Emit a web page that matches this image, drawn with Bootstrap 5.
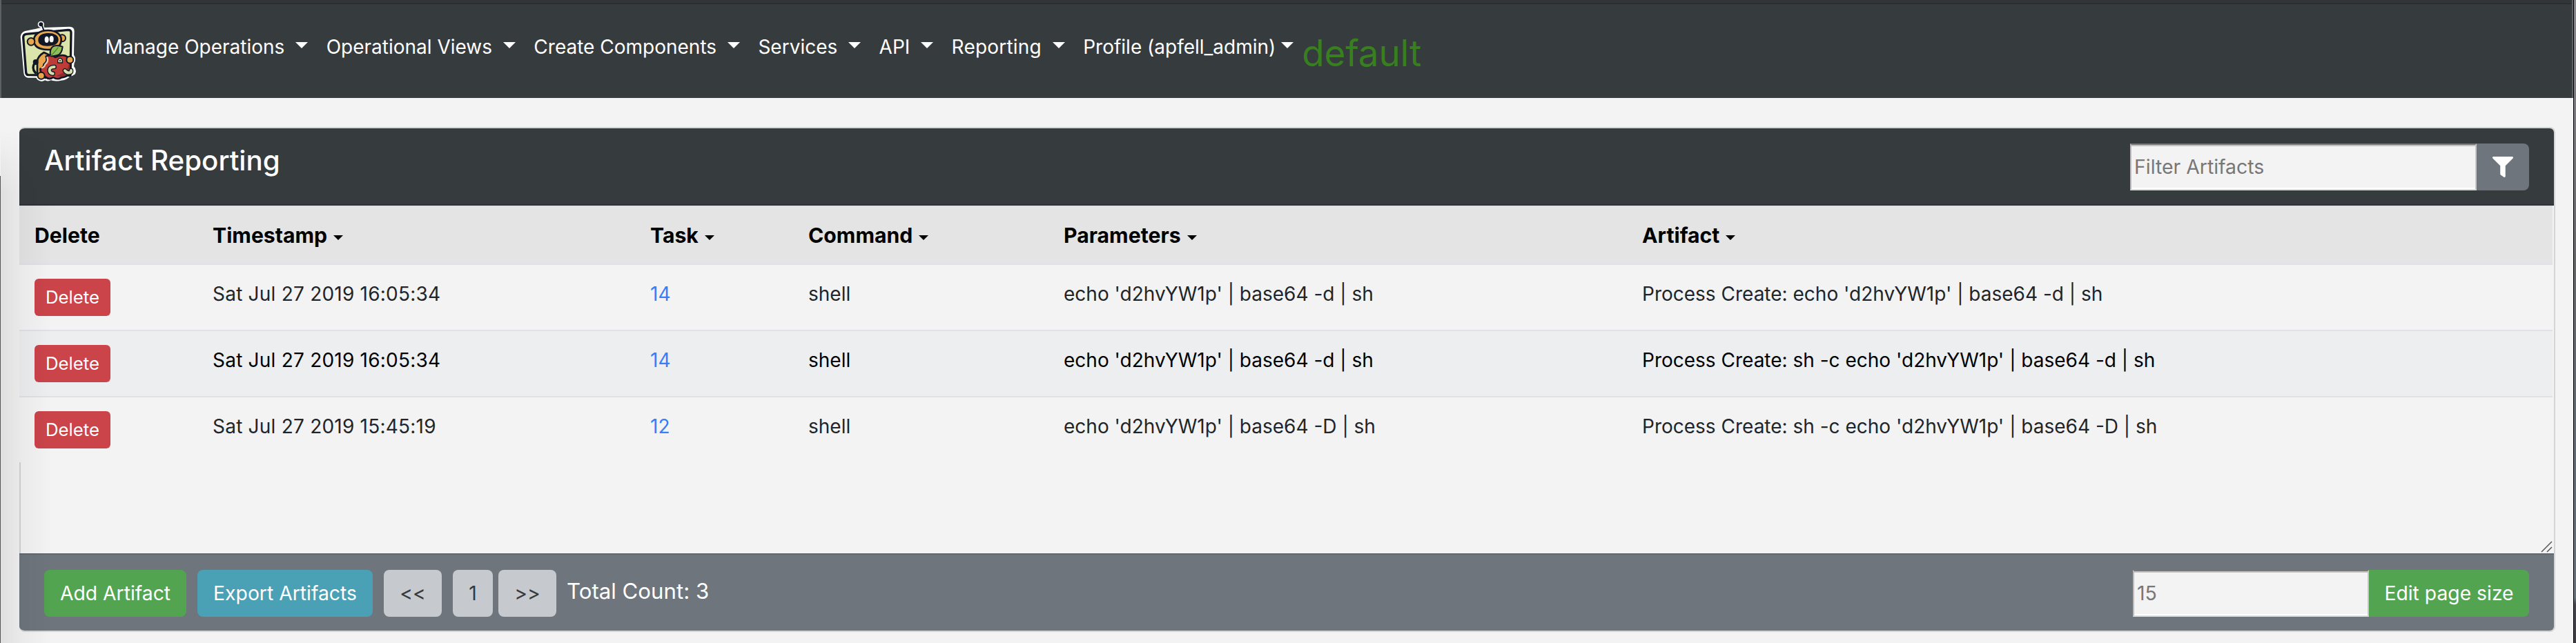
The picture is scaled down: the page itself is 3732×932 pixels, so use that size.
<!DOCTYPE html>
<html lang="en">
<head>
<meta charset="utf-8">
<title>Artifact Reporting</title>
<link rel="stylesheet" href="https://cdn.jsdelivr.net/npm/bootstrap@5.3.0/dist/css/bootstrap.min.css">
<script src="https://cdn.jsdelivr.net/npm/bootstrap@5.3.0/dist/js/bootstrap.bundle.min.js"></script>
<style>
  body { font-family: Inter, "Liberation Sans", sans-serif; font-size: 28px; line-height: 45px; background: #f3f3f3; color: #212529; height: 932px; overflow: hidden; position: relative; }
  a { text-decoration: none; color: #377ef7; }
  /* navigation */
  .top-strip { height: 6px; background: #313538; border-bottom: 1px solid #24282b; }
  .main-nav { height: 136px; background: #363b3e; padding: 0 0 0 29px; align-items: flex-start; flex-wrap: nowrap; justify-content: flex-start; }
  .logo { width: 82px; height: 90px; margin-top: 24px; flex: none; }
  .menus { margin: 40px 0 0 41.500px; gap: 26.300px; }
  .menus a { color: #fff; white-space: nowrap; }
  .menus a:nth-child(6) { letter-spacing: .2px; }
  .tri { display: inline-block; border: 9px solid transparent; border-top-color: currentColor; border-bottom: 0; margin-left: 16px; vertical-align: 8px; }
  .op-name { color: #38801f; font-size: 53px; line-height: 60px; letter-spacing: -.2px; margin: 40.5px 0 0 12px; }
  /* card */
  .report { margin: 42px 30px 0 28px; border: 2px solid #d3d4d4; border-left: 0; border-radius: 8px; background: #f3f3f3; overflow: hidden; height: 732px; }
  .report-head { height: 112px; padding: 22px 36px 0 36px; background: #363b3e; border-bottom: 2px solid #2f3337; }
  .report-head h1 { font-size: 40.3px; font-weight: 500; line-height: 48px; color: #fff; margin: 1px 0 0; }
  .report-body { height: 504px; position: relative; border-left: 2px solid #d3d4d4; }
  .grid-table { width: 3670px; margin-left: -2px; table-layout: fixed; border-collapse: separate; border-spacing: 0; background: #f3f3f3; }
  .grid-table th { height: 86px; padding: 0 0 0 22px; background: #e4e4e4; border-top: 2px solid #dee2e6; border-bottom: 2px solid #dee2e6; color: #000; font-size: 30.2px; font-weight: 700; vertical-align: middle; }
  .grid-table td { height: 96px; padding: 19.6px 0 0 22px; border-bottom: 2px solid #dee2e6; vertical-align: top; white-space: nowrap; }
  .grid-table tbody tr:last-child td { border: 0; height: 94px; }
  .grid-table .alt td { background: #edeef0; color: #000; }
  .stamp { letter-spacing: .22px; }
  .tri-sm { border-width: 7px; border-bottom: 0; margin-left: 9px; vertical-align: 4px; }
  .btn { border: 0; border-radius: 8px; font-size: 28.3px; line-height: 45px; padding: 0; height: 68px; color: #fff; }
  .btn-del { display: block; width: 110px; height: 54px; font-size: 25.8px; border-radius: 6px; background: #cb444a; margin-top: .4px; }
  .btn-add { width: 206px; background: #52a450; }
  .btn-exp { width: 254px; background: #4aa0b5; }
  .btn-page { background: #c6c9ce; color: #36393d; }
  .btn-funnel { width: 76px; background: #6e757d; }
  .inset-box { height: 68px; border: 2px solid; border-color: #777 #c8c8c8 #dcdcdc #bdbdbd; border-radius: 0; background: #f3f3f3; box-shadow: inset 0 2px #c3c3c3, inset 0 -2px #fff; padding: 0 0 1px 4px; font: inherit; font-size: 28.4px; color: #777; outline: 0; }
  .inset-box::placeholder { color: #777; opacity: 1; }
  .box-filter { width: 502px; }
  .box-page { width: 342px; }
  .joined { border-radius: 0 8px 8px 0; }
  .grip { position: absolute; right: 2px; bottom: 1px; }
  .report-foot { height: 112px; padding: 22px 36px 0 36px; background: #6e757d; border-top: 2px solid #62686f; color: #fff; align-items: flex-start; }
  .total { font-size: 31.2px; margin: 8.5px 0 0 15px; }
  /* shading along the window's edges */
  .edge-shade { position: absolute; left: 1px; top: 190px; width: 75px; bottom: 0; background: linear-gradient(90deg, rgba(0,0,0,.075), rgba(0,0,0,.03) 45%, transparent); -webkit-mask-image: linear-gradient(transparent, #000 90px); mask-image: linear-gradient(transparent, #000 90px); pointer-events: none; }
  .edge-line { position: absolute; left: 0; top: 255px; width: 1px; bottom: 0; background: #555; }
  .edge-nav { position: absolute; left: 0; top: 0; width: 2px; height: 142px; background: #5d6164; }
  .edge-nav-r { position: absolute; right: 4px; top: 0; width: 2px; height: 142px; background: #5d6164; }
  .edge-right { position: absolute; right: 0; top: 0; width: 4px; bottom: 0; border-left: 1px solid #000; background: linear-gradient(#8a8a8e, #66666c 40%, #5e6b78 70%, #64717e 93%, #444552 94%, #3e3b45); }
</style>
</head>
<body>
<div class="top-strip"></div>
<nav class="navbar main-nav">
  <svg class="logo" viewBox="85 90 246 270" stroke-linejoin="round" stroke-linecap="round">
    <g fill="#fff" stroke="#fff" stroke-width="10">
      <circle cx="176" cy="106" r="9"/><path d="M178 108l8 20" stroke-width="16"/>
      <path d="M108 140L148 132Q165 126 190 125L300 121Q316 121 316 135L314 240Q326 257 316 273L314 290Q328 306 320 319Q310 327 300 327Q285 345 262 345Q235 351 219 343Q205 352 193 342Q180 356 163 342L158 333L118 333Q108 330 106 318L92 160Q94 145 108 140Z"/>
    </g>
    <path d="M112 148L294 130Q307 130 307 142L304 328L120 326Q112 325 111 315L99 163Q99 150 112 148Z" fill="#dbe5ab" stroke="#111724" stroke-width="10"/>
    <path d="M180 109q5 14 9 24" stroke="#111724" stroke-width="6" fill="none"/><circle cx="176" cy="106" r="9" fill="#111724"/>
    <path d="M189 228Q161 245 160 267L160 320 196 339 214 240Z" fill="#e8a64f" stroke="#111724" stroke-width="8"/>
    <path d="M150 272Q133 295 152 317" stroke="#111724" stroke-width="10" fill="none"/><circle cx="153" cy="270" r="12" fill="#111724"/>
    <circle cx="268" cy="166" r="15" fill="#e8a64f" stroke="#111724" stroke-width="6"/>
    <path d="M145 178C143 149 172 132 207 132S267 151 264 177 240 217 205 216 147 203 145 178Z" fill="#e8a64f" stroke="#111724" stroke-width="8"/>
    <circle cx="133" cy="181" r="16" fill="#e8a64f" stroke="#111724" stroke-width="6"/>
    <path d="M164 174C165 150 187 144 210 144S253 154 252 173 233 199 207 200 164 193 164 174Z" fill="#111724"/>
    <ellipse cx="201" cy="172" rx="9" ry="14" fill="#fff"/><ellipse cx="222" cy="170" rx="9" ry="14" fill="#fff"/>
    <path d="M198 245Q223 235 238 249Q273 231 293 249Q308 270 304 302Q300 335 265 337Q248 349 229 336Q212 350 195 334Q174 322 173 300Q188 292 189 279Q207 266 198 245Z" fill="#bd3c38" stroke="#111724" stroke-width="8"/>
    <path d="M203 250Q211 268 194 280Q193 290 180 295" stroke="#f0c9a6" stroke-width="7" fill="none"/>
    <path d="M262 333Q294 331 300 301Q302 280 300 265Q298 315 240 330Z" fill="#8b2d30"/>
    <path d="M218 244Q211 216 228 202Q244 193 270 203Q267 235 248 240Q232 245 218 244Z" fill="#8fbd57" stroke="#111724" stroke-width="6"/><path d="M219 242Q240 222 250 207" stroke="#4f7e37" stroke-width="4" fill="none"/>
    <path d="M234 291Q212 291 213 307Q215 319 228 320" stroke="#111724" stroke-width="20" fill="none"/><path d="M234 291Q212 291 213 307Q215 319 228 320" stroke="#d5dfab" stroke-width="12" fill="none"/>
    <path d="M280 307Q293 322 307 313V306" stroke="#111724" stroke-width="20" fill="none"/><path d="M280 307Q293 322 307 313V306" stroke="#d5dfab" stroke-width="12" fill="none"/>
    <path d="M249 273V262Q251 253 260 253Q269 254 269 263V273Z" fill="#d5dfab" stroke="#111724" stroke-width="4"/><circle cx="259" cy="264" r="3" fill="#111724"/>
    <circle cx="302" cy="260" r="15" fill="#e8a64f" stroke="#111724" stroke-width="6"/>
    <circle cx="177" cy="329" r="15" fill="#e8a64f" stroke="#111724" stroke-width="6"/>
  </svg>
  <div class="menus d-flex">
    <a href="#">Manage Operations<i class="tri"></i></a>
    <a href="#">Operational Views<i class="tri"></i></a>
    <a href="#">Create Components<i class="tri"></i></a>
    <a href="#">Services<i class="tri"></i></a>
    <a href="#">API<i class="tri"></i></a>
    <a href="#">Reporting<i class="tri"></i></a>
    <a href="#">Profile (apfell_admin)<i class="tri ms-2"></i></a>
  </div>
  <span class="op-name">default</span>
</nav>

<main class="report">
  <div class="report-head d-flex justify-content-between align-items-start">
    <h1>Artifact Reporting</h1>
    <div class="d-flex">
      <input class="inset-box box-filter" placeholder="Filter Artifacts">
      <button class="btn joined btn-funnel" aria-label="Filter">
        <svg class="d-block mx-auto" width="30" height="30" viewBox="0 0 512 512" fill="#fff"><path d="M488 0H24C2.700 0-8 25.900 7.100 41L192 225.900V432c0 7.800 3.800 15.200 10.200 19.700l80 56C298 518.700 320 507.500 320 488V225.900L505 41C520 25.900 509.300 0 488 0z"/></svg>
      </button>
    </div>
  </div>
  <div class="report-body">
    <table class="grid-table">
      <colgroup><col style="width:258px"><col style="width:634px"><col style="width:229px"><col style="width:370px"><col style="width:838px"><col></colgroup>
      <thead><tr><th>Delete</th><th>Timestamp<i class="tri tri-sm"></i></th><th>Task<i class="tri tri-sm"></i></th><th>Command<i class="tri tri-sm"></i></th><th>Parameters<i class="tri tri-sm"></i></th><th>Artifact<i class="tri tri-sm"></i></th></tr></thead>
      <tbody>
        <tr><td><button class="btn btn-del">Delete</button></td><td class="stamp">Sat Jul 27 2019 16:05:34</td><td><a href="#">14</a></td><td>shell</td><td>echo 'd2hvYW1p' | base64 -d | sh</td><td>Process Create: echo 'd2hvYW1p' | base64 -d | sh</td></tr>
        <tr class="alt"><td><button class="btn btn-del">Delete</button></td><td class="stamp">Sat Jul 27 2019 16:05:34</td><td><a href="#">14</a></td><td>shell</td><td>echo 'd2hvYW1p' | base64 -d | sh</td><td>Process Create: sh -c echo 'd2hvYW1p' | base64 -d | sh</td></tr>
        <tr><td><button class="btn btn-del">Delete</button></td><td class="stamp">Sat Jul 27 2019 15:45:19</td><td><a href="#">12</a></td><td>shell</td><td>echo 'd2hvYW1p' | base64 -D | sh</td><td>Process Create: sh -c echo 'd2hvYW1p' | base64 -D | sh</td></tr>
      </tbody>
    </table>
    <svg class="grip" width="17" height="17" fill="none" stroke="#555" stroke-width="1.500"><path d="M1 16L16 1M9 16l7-7"/></svg>
  </div>
  <div class="report-foot d-flex">
    <button class="btn btn-add">Add Artifact</button>
    <button class="btn btn-exp ms-3">Export Artifacts</button>
    <button class="btn btn-page ms-3" style="width:84px">&lt;&lt;</button>
    <button class="btn btn-page ms-3" style="width:58px">1</button>
    <button class="btn btn-page ms-2" style="width:84px">&gt;&gt;</button>
    <span class="total">Total Count: 3</span>
    <div class="d-flex ms-auto">
      <input class="inset-box box-page" placeholder="15">
      <button class="btn btn-add joined" style="width:232px">Edit page size</button>
    </div>
  </div>
</main>
<div class="edge-shade"></div>
<div class="edge-line"></div>
<div class="edge-nav"></div>
<div class="edge-nav-r"></div>
<div class="edge-right"></div>
</body>
</html>
